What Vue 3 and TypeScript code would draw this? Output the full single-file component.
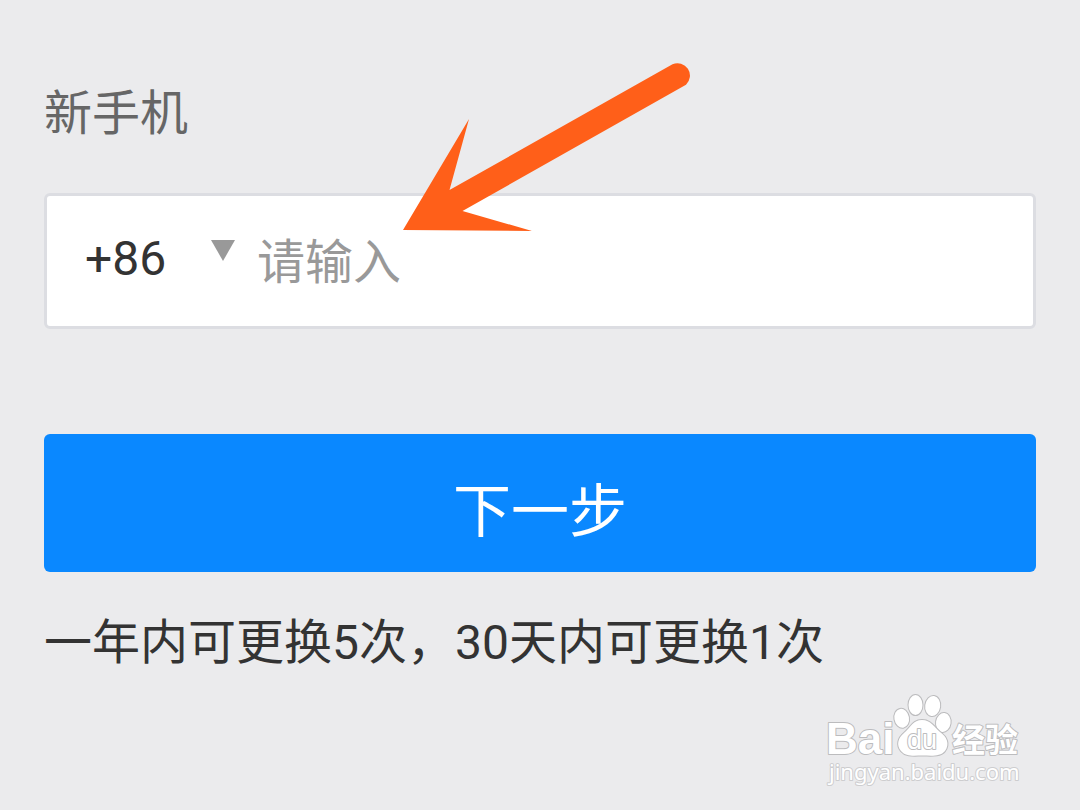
<script setup lang="ts">
import { ref } from 'vue'

const codes: string[] = ['+86']
const code = ref<string>('+86')
const phone = ref<string>('')
</script>

<template>
  <main class="page">
    <form class="form" @submit.prevent>
      <label class="label" for="phone">新手机</label>
      <div class="field">
        <div class="code">
          <select v-model="code" class="code-select" aria-label="国家代码">
            <option v-for="c in codes" :key="c" :value="c">{{ c }}</option>
          </select>
          <svg class="caret" width="24" height="21" viewBox="0 0 24 21" aria-hidden="true">
            <path d="M0 0H24L12 21Z" fill="#999" />
          </svg>
        </div>
        <input id="phone" v-model="phone" class="input" type="tel" placeholder="请输入" />
        <svg class="arrow" width="290" height="170" viewBox="0 0 290 170" aria-hidden="true">
          <path
            d="M0 168L66 57L46.500 128L269.500 2.300A12.400 12.400 0 0 1 283 22.700L59.500 149L129 169Z"
            fill="#ff5f19"
          />
        </svg>
      </div>
      <button class="next" type="submit">下一步</button>
      <p class="hint">一年内可更换5次，30天内可更换1次</p>
    </form>

    <svg class="mark" width="210" height="110" viewBox="0 0 210 110" role="img" aria-label="Baidu 经验">
      <g class="outlined">
        <text class="brand" x="3" y="64">Bai</text>
        <ellipse cx="78.700" cy="28.300" rx="7.300" ry="9.500" transform="rotate(-10 78.700 28.300)" />
        <ellipse cx="92.500" cy="15" rx="7" ry="10" />
        <ellipse cx="109.700" cy="16" rx="7.500" ry="10" transform="rotate(8 109.700 16)" />
        <ellipse cx="120.300" cy="32.500" rx="7.300" ry="9.500" transform="rotate(8 120.300 32.500)" />
        <path
          d="M99 30C108 30 111 37 117 42C124 47 127 54 122 61C117 67 108 65.500 99.500 65.500C91 65.500 83 67 78 61C73 55 75 48 81 43C88 37 90 30 99 30Z"
        />
        <text class="paw-text" x="84" y="59">du</text>
        <text class="cn" x="129" y="62">经验</text>
      </g>
      <text class="outlined site" x="6" y="90">jingyan.baidu.com</text>
    </svg>
  </main>
</template>

<style>
body {
  background: #ebebed;
}
</style>

<style scoped>
.page {
  position: relative;
  box-sizing: border-box;
  min-height: 100vh;
  padding: 78px 44px 0;
  background: #ebebed;
  color: #333;
  font-family: Roboto, "Noto Sans CJK SC", sans-serif;
  font-size: 48px;
  line-height: 72px;
}

.form {
  display: flex;
  flex-direction: column;
}

.label {
  color: #666;
}

.field {
  position: relative;
  display: flex;
  align-items: center;
  margin-top: 43px;
  height: 130px;
  border: 3px solid #dcdde2;
  border-radius: 6px;
  background: #fff;
}

.code {
  display: flex;
  align-items: center;
  margin-left: 38px;
}

.code-select {
  width: 126px;
  height: 72px;
  margin: 0 0 4px;
  padding: 0;
  border: 0;
  outline: 0;
  appearance: none;
  background: transparent;
  color: #333;
  font: inherit;
}

.caret {
  margin-bottom: 22px;
}

.input {
  flex: 1;
  min-width: 0;
  height: 74px;
  margin: 0 0 0 22px;
  padding: 2px 0 0;
  border: 0;
  outline: 0;
  background: transparent;
  color: #333;
  font: inherit;
}

.input::placeholder {
  color: #999;
  opacity: 1;
}

.arrow {
  position: absolute;
  left: 356px;
  bottom: 94px;
  pointer-events: none;
}

.next {
  margin-top: 105px;
  height: 138px;
  padding: 18px 0 0;
  border: 0;
  border-radius: 6px;
  background: #0a88ff;
  color: #fff;
  font: inherit;
  font-size: 58px;
}

.hint {
  margin: 35px 0 0;
}

.mark {
  position: absolute;
  right: 47px;
  bottom: 10px;
}

.outlined {
  fill: #fff;
  stroke: #bcbcbe;
  stroke-width: 2px;
  stroke-linejoin: round;
  paint-order: stroke;
}

.brand {
  font-family: "Liberation Sans", sans-serif;
  font-size: 44px;
  font-weight: 700;
}

.paw-text {
  font-family: "Liberation Sans", sans-serif;
  font-size: 27px;
}

.cn {
  font-family: "Noto Sans CJK SC", sans-serif;
  font-size: 33px;
  font-weight: 700;
}

.site {
  font-family: "Noto Sans", sans-serif;
  font-size: 22px;
  stroke: #cdcdcf;
}
</style>
